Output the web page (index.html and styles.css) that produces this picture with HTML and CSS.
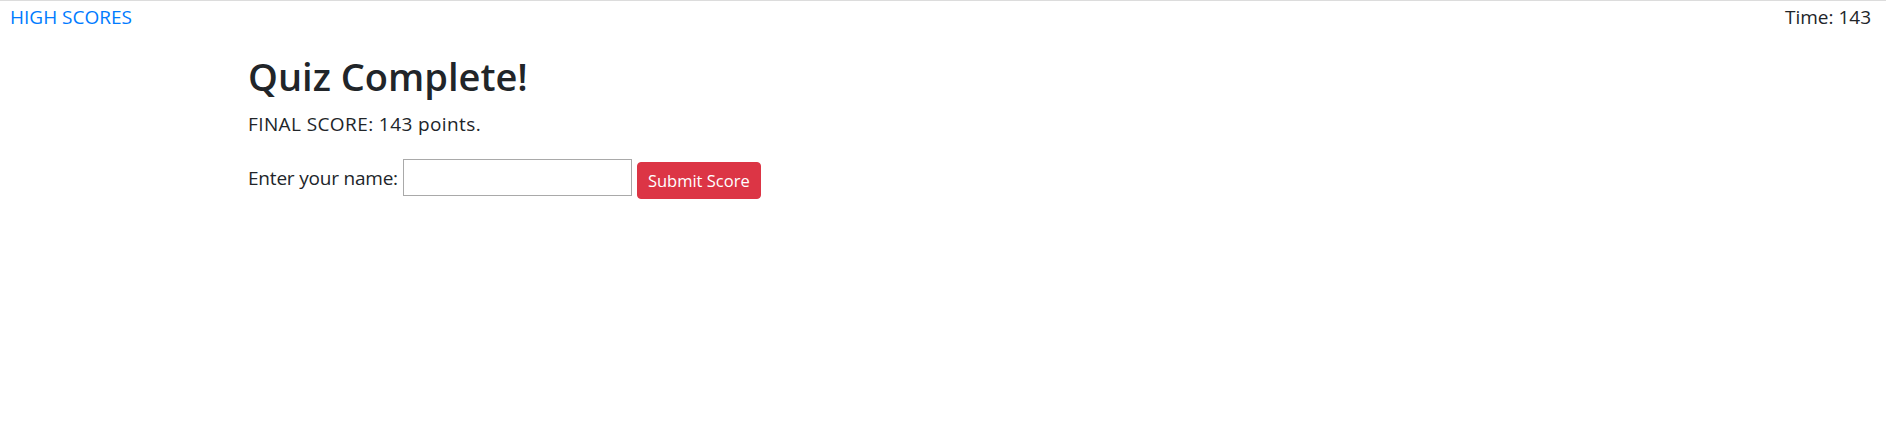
FILE: index.html
```html
<!DOCTYPE html>
<html lang="en">
<head>
<meta charset="utf-8">
<title>Quiz Complete</title>
<link rel="stylesheet" href="styles.css">
</head>
<body>
<header class="topbar">
  <a class="hs-link" href="#">HIGH SCORES</a>
  <span class="timer">Time: 143</span>
</header>
<main class="container">
  <h2 class="title">Quiz Complete!</h2>
  <p class="score">FINAL SCORE: 143 points.</p>
  <form class="name-form">
    <label class="name-label" for="name">Enter your name:</label>
    <input class="name-input" id="name" type="text">
    <button class="submit-btn" type="button">Submit Score</button>
  </form>
</main>
</body>
</html>
```
FILE: styles.css
```css
html, body {
  margin: 0;
  padding: 0;
  background: #ffffff;
}
body {
  font-family: "Open Sans", "Noto Sans", sans-serif;
  font-size: 19px;
  color: #212529;
}
.topbar {
  border-top: 1px solid #dcdcdc;
  display: flex;
  justify-content: space-between;
  align-items: center;
  padding: 2px 15px 0 10px;
  line-height: 28px;
}
.hs-link {
  color: #007bff;
  text-decoration: none;
}
.timer {
  color: #212529;
}
.container {
  margin-left: 248px;
  padding-top: 22px;
}
.title {
  font-size: 38px;
  font-weight: 600;
  line-height: 46px;
  margin: 0 0 11px 0;
}
.score {
  margin: 0 0 18px 0;
  line-height: 28px;
  letter-spacing: 0.4px;
}
.name-form {
  display: flex;
  align-items: center;
  gap: 5px;
}
.name-label {
  line-height: 28px;
  letter-spacing: -0.2px;
}
.name-input {
  width: 223px;
  height: 35px;
  border: 1px solid #a9a9a9;
  padding: 0 2px;
  margin: 0;
  font-size: 16px;
  box-sizing: content-box;
}
.submit-btn {
  background: #dc3545;
  color: #ffffff;
  border: 1px solid #dc3545;
  border-radius: 4px;
  font-family: "Open Sans", "Noto Sans", sans-serif;
  font-size: 16.5px;
  line-height: 25px;
  padding: 5px 10px;
  margin-top: 6px;
}
```
